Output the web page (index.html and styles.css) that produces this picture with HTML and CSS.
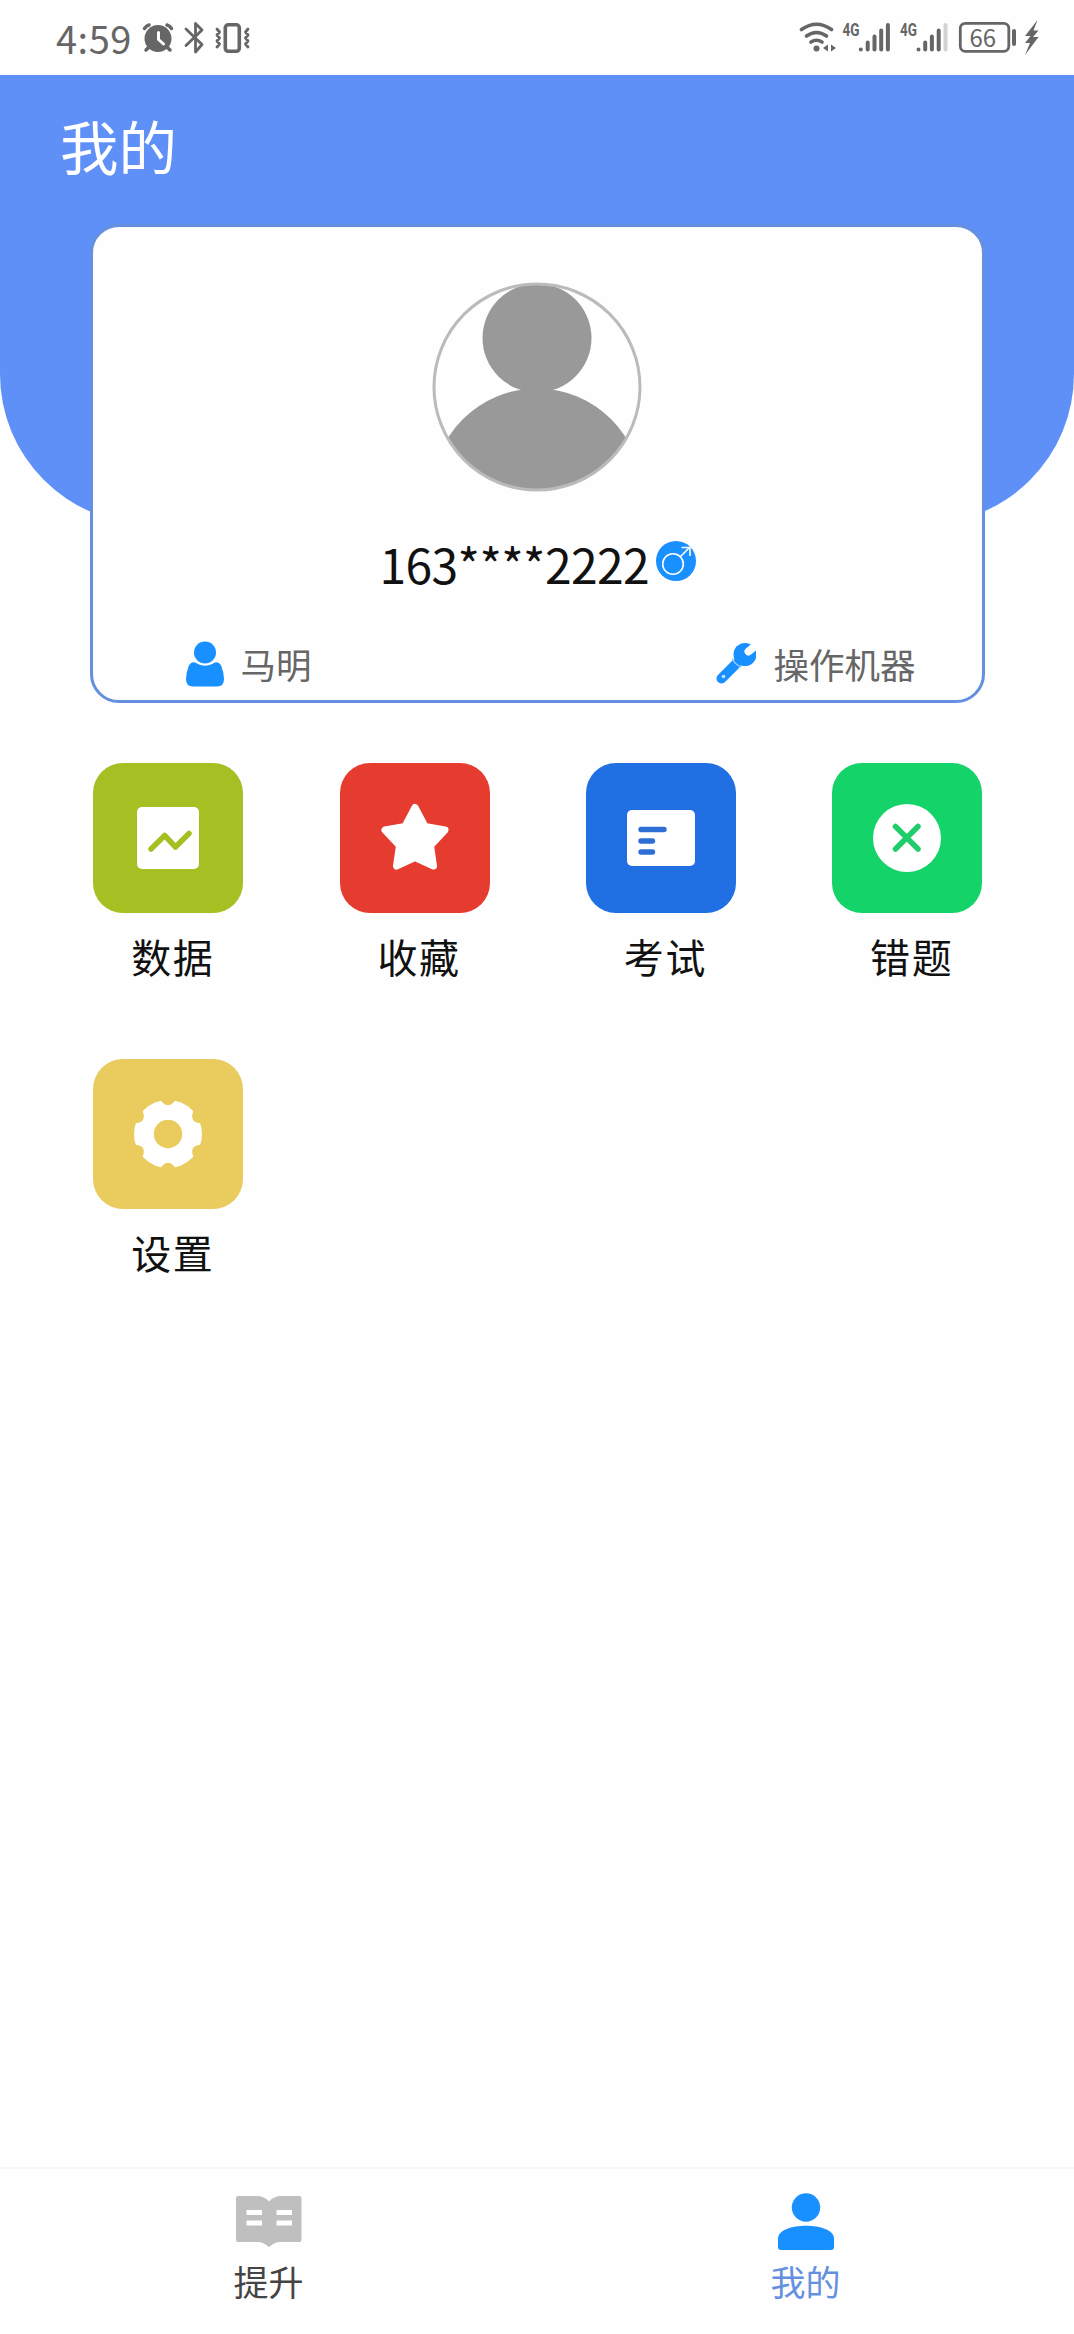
FILE: index.html
```html
<!DOCTYPE html>
<html lang="zh-CN">
<head>
<meta charset="utf-8">
<title>我的</title>
<link rel="stylesheet" href="styles.css">
</head>
<body>
<div class="screen">
  <div class="status">
    <span class="time">4:59</span>
    <svg class="status-left" width="112" height="36" viewBox="142 20 112 36">
      <g fill="none" stroke="#666" stroke-linecap="round" stroke-linejoin="round">
        <circle cx="158" cy="38.500" r="13.500" fill="#666" stroke="none"/>
        <path d="M144.500 28.500q2-3 4.500-3.500M171.500 28.500q-2-3-4.500-3.500" stroke-width="3.500"/>
        <path d="M149 47l-3 3M167 47l3 3" stroke-width="3.500"/>
        <path d="M158.500 32.500v7l5 4.500" stroke="#fff" stroke-width="3"/>
        <path d="M186 29l16 15.500-6.500 7.500V23.500l6.500 6.500-16 15.500" stroke-width="2.800"/>
        <rect x="225.300" y="24.800" width="14" height="26.500" rx="3" stroke-width="3.600"/>
        <path d="M217 29l2.500 3-2.500 3 2.500 3-2.500 3 2.500 3-2.500 3M248 29l-2.500 3 2.500 3-2.500 3 2.500 3-2.500 3 2.500 3" stroke-width="2.800"/>
      </g>
    </svg>
    <svg class="status-right" width="244" height="40" viewBox="798 18 244 40">
      <g fill="none" stroke="#666" stroke-linecap="round" stroke-linejoin="round">
        <path d="M801.500 29.500q15-10.500 30 0" stroke-width="3.600"/>
        <path d="M806.500 36q10-7 20 0" stroke-width="3.600"/>
        <path d="M811 42q5.500-3.500 11 0" stroke-width="3.600"/>
        <circle cx="816.500" cy="48.500" r="3" fill="#666" stroke="none"/>
        <path d="M828 44.500v7l-5-3.500zM831 44.500v7l5-3.500z" fill="#666" stroke="none"/>
        <path d="M860.800 49.500v0M867.700 42.500v7M874.500 36.500v13M881.200 30.500v19M887.900 25v24.500" stroke-width="4"/>
        <path d="M918.500 49.500v0M925.200 42.500v7M931.900 36.500v13M938.700 30.500v19" stroke-width="4"/>
        <path d="M945.500 25v24.500" stroke="#d2d2d2" stroke-width="4"/>
        <rect x="960.300" y="23.300" width="48.500" height="28" rx="5" stroke-width="2.800"/>
        <path d="M1014 31v13" stroke-width="4"/>
        <path d="M1037.500 20l-12.500 16h5.500l-5.500 7h5l-5 12 13.500-18h-5.500l5.500-6.500h-5z" fill="#666" stroke="none"/>
      </g>
      <text class="net" x="842.500" y="35.500" textLength="17" lengthAdjust="spacingAndGlyphs">4G</text>
      <text class="net" x="900" y="35.500" textLength="17" lengthAdjust="spacingAndGlyphs">4G</text>
      <text class="charge" x="969.500" y="46.500" textLength="26.500" lengthAdjust="spacingAndGlyphs">66</text>
    </svg>
  </div>

  <header class="hero">
    <h1 class="title">我的</h1>
    <section class="card">
      <svg class="avatar" width="210" height="210" viewBox="0 0 210 210">
        <clipPath id="face"><circle cx="105" cy="105" r="103"/></clipPath>
        <g clip-path="url(#face)" fill="#999">
          <circle cx="105" cy="56" r="54.500"/>
          <circle cx="105" cy="211.500" r="105"/>
        </g>
        <circle cx="105" cy="105" r="103" fill="none" stroke="#bbb" stroke-width="3"/>
      </svg>
      <div class="account">
        <span class="phone">163****2222</span>
        <svg width="40" height="40" viewBox="0 0 40 40">
          <circle cx="20" cy="20" r="20" fill="#1890ff"/>
          <g fill="none" stroke="#fff" stroke-width="1.600">
            <circle cx="17" cy="23" r="10.300"/>
            <path d="M24.500 15.500l9-9M25.500 6.500h8.500v8.500"/>
          </g>
        </svg>
      </div>
      <div class="info">
        <div class="info-item">
          <svg width="38" height="46" viewBox="0 0 38 46" fill="#1890ff">
            <circle cx="19" cy="11.500" r="11"/>
            <path d="M9 21.500q10 6.500 20 0 4-1 6.500 4 2.500 7 2.500 12.500 0 7.500-7 7.500H7q-7 0-7-7.500 0-5.500 2.500-12.500Q5 20.500 9 21.500z"/>
          </svg>
          <span>马明</span>
        </div>
        <div class="info-item">
          <svg width="40" height="42" viewBox="0 0 40 42" fill="none" stroke-linecap="round">
            <circle cx="29" cy="11.500" r="11.500" fill="#1890ff"/>
            <path d="M32.500 8.500L41 1.500" stroke="#fefefe" stroke-width="8"/>
            <path d="M5.500 35.500L20 21" stroke="#1890ff" stroke-width="10"/>
            <path d="M16.500 15.500q2 6 9 8.500" stroke="#9fd0ff" stroke-width="1.200"/>
            <circle cx="7.500" cy="33.500" r="1.800" fill="#c5e3ff"/>
          </svg>
          <span>操作机器</span>
        </div>
      </div>
    </section>
  </header>

  <main class="menu">
    <div class="entry">
      <svg class="tile data" viewBox="0 0 150 150">
        <rect x="44" y="44" width="62" height="62" rx="5" fill="#fff"/>
        <path d="M58 86l13.700-13.500L82.500 84 96 70.500" fill="none" stroke="#a6bf23" stroke-width="5.500" stroke-linecap="round" stroke-linejoin="round"/>
      </svg>
      <span>数据</span>
    </div>
    <div class="entry">
      <svg class="tile star" viewBox="0 0 150 150">
        <path d="M75 44.500l10 19 20 3.500-14.500 15.500 3 20.500L75 94.500 56.500 103l3-20.500L45 67l20-3.500z" fill="#fff" stroke="#fff" stroke-width="7" stroke-linejoin="round"/>
      </svg>
      <span>收藏</span>
    </div>
    <div class="entry">
      <svg class="tile exam" viewBox="0 0 150 150">
        <rect x="41" y="47" width="68" height="56" rx="5" fill="#fff"/>
        <path d="M55 66.500h23M55 78h11.500M55 89h11.500" fill="none" stroke="#2e6fd6" stroke-width="5.400" stroke-linecap="round"/>
      </svg>
      <span>考试</span>
    </div>
    <div class="entry">
      <svg class="tile wrong" viewBox="0 0 150 150">
        <circle cx="75" cy="75" r="34" fill="#fff"/>
        <path d="M63.500 63.500L86 86M86 63.500L63.500 86" fill="none" stroke="#1fcd6b" stroke-width="5.500" stroke-linecap="round"/>
      </svg>
      <span>错题</span>
    </div>
    <div class="entry">
      <svg class="tile setup" viewBox="0 0 150 150">
        <circle cx="75" cy="75" r="34" fill="#fff"/>
        <g fill="#eacc5e">
          <circle cx="75" cy="75" r="14.200"/>
          <g id="notch">
            <path d="M66 39l4 5q5 4.500 10 0l4-5z"/>
            <path d="M66 111l4-5q5-4.500 10 0l4 5z"/>
          </g>
          <use href="#notch" transform="rotate(60 75 75)"/>
          <use href="#notch" transform="rotate(120 75 75)"/>
        </g>
      </svg>
      <span>设置</span>
    </div>
  </main>

  <nav class="tabs">
    <div class="tab">
      <svg width="66" height="58" viewBox="0 0 66 58">
        <path d="M2 3h19q7 0 12 5.500Q38 3 45 3h18.500q2 0 2 2v42q0 2-2 2H44q-5 0-11 5-6-5-11-5H2q-2 0-2-2V5q0-2 2-2z" fill="#bfbfbf"/>
        <path d="M10.500 19.500H26M10.500 30H26M40.500 19.500H56M40.500 30H56" stroke="#fff" stroke-width="5"/>
      </svg>
      <span>提升</span>
    </div>
    <div class="tab active">
      <svg width="58" height="58" viewBox="0 0 58 58" fill="#1890ff">
        <circle cx="29" cy="14.500" r="14.200"/>
        <path d="M1 54V45.500C1 28.500 57 28.500 57 45.500V54q0 3-3 3H4q-3 0-3-3z"/>
      </svg>
      <span>我的</span>
    </div>
  </nav>
</div>
</body>
</html>
```
FILE: styles.css
```css
* { box-sizing: border-box; }
body {
  margin: 0;
  background: #fefefe;
  font-family: "Noto Sans CJK SC", "Noto Sans", sans-serif;
  color: #111;
}
svg { display: block; flex: none; }
.screen {
  width: 1074px;
  height: 2334px;
  display: flex;
  flex-direction: column;
}
.status {
  height: 75px;
  flex: none;
  display: flex;
  align-items: flex-start;
  background: #fefefe;
  color: #666;
}
.time {
  width: 86px;
  margin: 10px 0 0 56px;
  font-size: 38px;
  line-height: 56px;
  letter-spacing: 0.500px;
  white-space: nowrap;
}
.status-left { margin-top: 20px; }
.status-right { margin: 18px 32px 0 auto; }
.net { font: 700 18px Roboto, sans-serif; fill: #666; }
.charge { font: 400 24px "Noto Sans CJK SC", sans-serif; fill: #666; }
.hero {
  height: 449px;
  flex: none;
  background: #5f90f7;
  border-radius: 0 0 150px 150px;
}
.title {
  margin: 0;
  height: 149px;
  padding: 28px 0 0 60px;
  color: #fff;
  font-size: 58.500px;
  font-weight: 400;
  line-height: 84px;
}
.card {
  width: 895px;
  height: 479px;
  margin: 0 auto;
  padding-top: 55px;
  display: flex;
  flex-direction: column;
  align-items: center;
  background: #fefefe;
  border: 3px solid #6490df;
  border-radius: 29px;
}
.account {
  height: 55px;
  display: flex;
  align-items: flex-start;
  gap: 8px;
  margin: 49px 0 0 1px;
}
.phone {
  width: 268px;
  margin-top: -13px;
  font-size: 48px;
  line-height: 70px;
  letter-spacing: -0.600px;
  white-space: nowrap;
}
.info {
  width: 100%;
  padding: 0 66px 0 93px;
  margin-top: 43px;
  display: flex;
  justify-content: space-between;
  color: #666;
  font-size: 35.500px;
  line-height: 50px;
}
.info-item {
  display: flex;
  align-items: center;
  gap: 17px;
}
.menu {
  display: grid;
  grid-template-columns: repeat(4, 150px);
  column-gap: 96.300px;
  row-gap: 70px;
  padding: 239px 0 0 93.300px;
}
.entry {
  height: 226px;
  display: flex;
  flex-direction: column;
  align-items: center;
  font-size: 40px;
  line-height: 60px;
  letter-spacing: 1.600px;
}
.entry span { margin: 13px 0 0 9px; }
.tile {
  width: 150px;
  height: 150px;
  border-radius: 30px;
}
.data { background: #a6bf23; }
.star { background: #e63c2f; }
.exam { background: #2070e4; }
.wrong { background: #14d368; }
.setup { background: #eacc5e; }
.tabs {
  height: 167px;
  margin-top: auto;
  display: flex;
  border-top: 2px solid #f6f6f6;
}
.tab {
  flex: 1;
  padding-top: 24px;
  display: flex;
  flex-direction: column;
  align-items: center;
  color: #444;
  font-size: 35px;
  line-height: 50px;
}
.tab span { margin-top: 5px; }
.active { color: #6490df; }
```
